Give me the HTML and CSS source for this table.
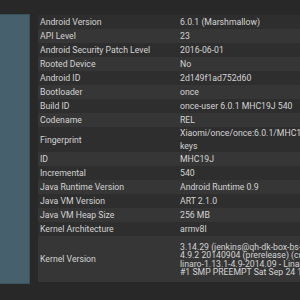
FILE: index.html
```html
<!DOCTYPE html>
<html>
<head>
<meta charset="utf-8">
<link rel="stylesheet" href="styles.css">
</head>
<body>
<div class="screen">
  <aside class="side-panel"></aside>
  <div class="info-table">
    <div class="row"><div class="label">Android Version</div><div class="value">6.0.1 (Marshmallow)</div></div>
    <div class="row"><div class="label">API Level</div><div class="value">23</div></div>
    <div class="row"><div class="label">Android Security Patch Level</div><div class="value">2016-06-01</div></div>
    <div class="row"><div class="label">Rooted Device</div><div class="value">No</div></div>
    <div class="row"><div class="label">Android ID</div><div class="value">2d149f1ad752d60</div></div>
    <div class="row"><div class="label">Bootloader</div><div class="value">once</div></div>
    <div class="row"><div class="label">Build ID</div><div class="value">once-user 6.0.1 MHC19J 540</div></div>
    <div class="row"><div class="label">Codename</div><div class="value">REL</div></div>
    <div class="row row-fingerprint"><div class="label">Fingerprint</div><div class="value multi">Xiaomi/once/once:6.0.1/MHC19J/540:user/release-<br>keys</div></div>
    <div class="row"><div class="label">ID</div><div class="value">MHC19J</div></div>
    <div class="row"><div class="label">Incremental</div><div class="value">540</div></div>
    <div class="row"><div class="label">Java Runtime Version</div><div class="value">Android Runtime 0.9</div></div>
    <div class="row"><div class="label">Java VM Version</div><div class="value">ART 2.1.0</div></div>
    <div class="row"><div class="label">Java VM Heap Size</div><div class="value">256 MB</div></div>
    <div class="row"><div class="label">Kernel Architecture</div><div class="value">armv8l</div></div>
    <div class="row row-kernel"><div class="label">Kernel Version</div><div class="value multi">3.14.29 (jenkins@qh-dk-box-bs-01) (gcc version<br>4.9.2 20140904 (prerelease) (crosstool-NG<br>linaro-1.13.1-4.9-2014.09 - Linaro GCC 4.9-2014.09) )<br>#1 SMP PREEMPT Sat Sep 24 18:00:00 CST 2016</div></div>
  </div>
</div>
</body>
</html>
```
FILE: styles.css
```css
html, body {
  margin: 0;
  padding: 0;
  background: #282828;
  width: 300px;
  height: 300px;
  overflow: hidden;
}

.screen {
  display: flex;
  align-items: flex-start;
  font-family: Roboto, "Noto Sans", sans-serif;
  font-size: 8.7px;
  color: #d4d4d4;
}

.side-panel {
  flex: 0 0 30px;
  height: 270px;
  margin-top: 14px;
  background: #46616b;
  box-sizing: border-box;
  border: 1px solid #3b525a;
  border-left: none;
}

.info-table {
  flex: 1;
  margin-left: 8px;
  margin-top: 15px;
  min-width: 0;
  overflow: hidden;
}

.row {
  display: flex;
  align-items: center;
  height: 14px;
  background: #2e2e2e;
}

.row:nth-child(even) {
  background: #363636;
}

.label {
  flex: 0 0 140px;
  padding-left: 2px;
  white-space: nowrap;
  overflow: hidden;
}

.value {
  flex: 1;
  white-space: nowrap;
  overflow: hidden;
}

.row-fingerprint {
  height: 25px;
}

.row-fingerprint .multi {
  line-height: 13px;
}

.row-kernel {
  height: 46px;
}

.row-kernel .multi {
  line-height: 8.4px;
  padding-top: 1px;
}
```
